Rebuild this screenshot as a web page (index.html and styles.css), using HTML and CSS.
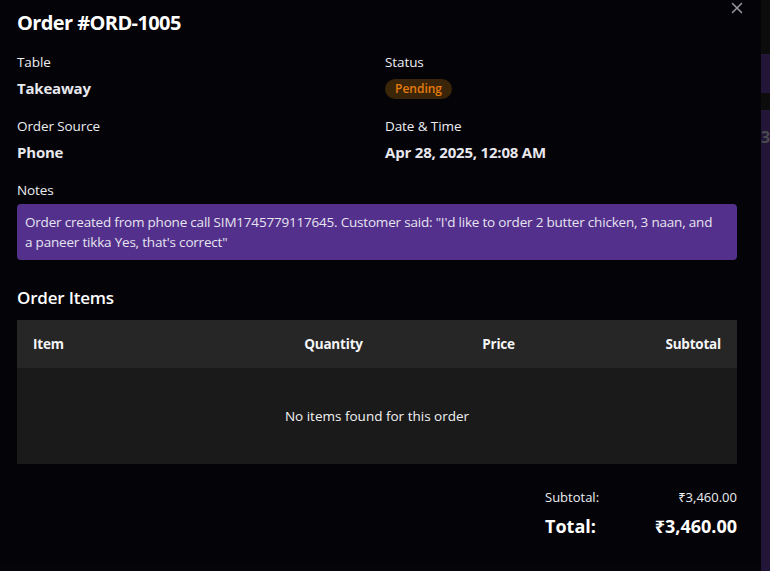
FILE: index.html
```html
<!DOCTYPE html>
<html lang="en">
<head>
<meta charset="utf-8">
<title>Order #ORD-1005</title>
<link rel="stylesheet" href="styles.css">
</head>
<body>
<div class="page">
  <div class="modal">
    <button class="close" aria-label="Close">
      <svg width="12" height="12" viewBox="0 0 12 12"><path d="M1.5 1.5l9 9M10.5 1.5l-9 9" stroke="#9a9aa2" stroke-width="1.5" stroke-linecap="round"/></svg>
    </button>
    <h2 class="title">Order #ORD-1005</h2>
    <div class="info-grid">
      <div class="field">
        <div class="label">Table</div>
        <div class="value">Takeaway</div>
      </div>
      <div class="field">
        <div class="label">Status</div>
        <div class="badge-row"><span class="badge">Pending</span></div>
      </div>
      <div class="field">
        <div class="label">Order Source</div>
        <div class="value">Phone</div>
      </div>
      <div class="field">
        <div class="label">Date &amp; Time</div>
        <div class="value">Apr 28, 2025, 12:08 AM</div>
      </div>
    </div>
    <div class="label notes-label">Notes</div>
    <div class="notes">Order created from phone call SIM1745779117645. Customer said: "I'd like to order 2 butter chicken, 3 naan, and a paneer tikka Yes, that's correct"</div>
    <h3 class="section-title">Order Items</h3>
    <div class="table">
      <div class="thead">
        <div class="th th-item">Item</div>
        <div class="th th-center">Quantity</div>
        <div class="th th-center">Price</div>
        <div class="th th-right">Subtotal</div>
      </div>
      <div class="tbody">No items found for this order</div>
    </div>
    <div class="totals">
      <div class="total-row"><span>Subtotal:</span><span>₹3,460.00</span></div>
      <div class="total-row grand"><span>Total:</span><span>₹3,460.00</span></div>
    </div>
  </div>
  <div class="behind">
    <div class="behind-top"></div>
    <div class="behind-card short"></div>
    <div class="behind-gap"></div>
    <div class="behind-card tall"><span class="behind-num">3</span></div>
  </div>
</div>
</body>
</html>
```

FILE: styles.css
```css
* { box-sizing: border-box; }
html, body {
  margin: 0;
  padding: 0;
  background: #050409;
  height: 571px;
  overflow: hidden;
}
body {
  font-family: "Open Sans", "Noto Sans", sans-serif;
  color: #f3f4f6;
  font-size: 14px;
}
.page {
  display: flex;
  height: 571px;
}
.modal {
  position: relative;
  width: 761px;
  flex: none;
  height: 566px;
  background: #040308;
  border-bottom-right-radius: 10px;
  padding: 10px 24px 0 17px;
}
.close {
  position: absolute;
  top: 1px;
  right: 17px;
  background: none;
  border: 0;
  padding: 0;
  width: 14px;
  height: 14px;
  display: flex;
  align-items: center;
  justify-content: center;
}
.title {
  margin: 0;
  font-size: 20px;
  font-weight: 700;
  color: #ffffff;
  line-height: 26px;
  letter-spacing: -0.6px;
}
.info-grid {
  display: grid;
  grid-template-columns: 368px 1fr;
  row-gap: 17px;
  margin-top: 16px;
}
.label {
  font-size: 13.5px;
  line-height: 20px;
  color: #eceef2;
  letter-spacing: -0.1px;
}
.value {
  margin-top: 6px;
  font-size: 15px;
  font-weight: 700;
  line-height: 20px;
  color: #e8e8ee;
  letter-spacing: -0.2px;
}
.badge-row {
  margin-top: 7px;
  height: 20px;
  display: flex;
  align-items: center;
}
.badge {
  display: inline-block;
  background: #3b2508;
  color: #e57b0c;
  font-size: 12px;
  font-weight: 600;
  line-height: 20px;
  padding: 0 10px;
  border-radius: 10px;
}
.notes-label {
  margin-top: 18px;
}
.notes {
  margin-top: 4px;
  background: #53308c;
  border-radius: 4px;
  padding: 8px 16px 8px 8px;
  font-size: 13.5px;
  line-height: 20px;
  color: #e6e4f0;
  letter-spacing: -0.2px;
}
.section-title {
  margin: 26px 0 0;
  font-size: 17px;
  font-weight: 600;
  line-height: 24px;
  color: #ffffff;
  letter-spacing: -0.2px;
}
.table {
  margin-top: 10px;
}
.thead {
  display: grid;
  grid-template-columns: 218px 165px 165px 1fr;
  background: #262626;
  height: 48px;
  align-items: center;
  padding: 0 16px;
}
.th {
  font-size: 13.5px;
  font-weight: 700;
  color: #f5f5f7;
  letter-spacing: -0.2px;
}
.th-center { text-align: center; }
.th-right { text-align: right; }
.tbody {
  background: #1a1a1a;
  height: 96px;
  display: flex;
  align-items: center;
  justify-content: center;
  font-size: 13.5px;
  color: #f2f2f4;
}
.totals {
  width: 192px;
  margin: 22px 0 0 auto;
}
.total-row {
  display: flex;
  justify-content: space-between;
  font-size: 13px;
  line-height: 20px;
  color: #eceef2;
  padding-top: 1px;
}
.total-row.grand {
  margin-top: 7px;
  padding-top: 0;
  font-size: 18px;
  font-weight: 700;
  line-height: 24px;
  color: #ffffff;
}
.behind {
  flex: 1;
  display: flex;
  flex-direction: column;
  background: #050409;
}
.behind-top {
  height: 54px;
  background: #0c0c0c;
}
.behind-card {
  background: #221538;
}
.behind-card.short { height: 39px; }
.behind-gap { height: 17px; background: #0c0c0c; }
.behind-card.tall {
  flex: 1;
  position: relative;
  overflow: hidden;
}
.behind-num {
  position: absolute;
  left: 0;
  top: 16px;
  font-size: 16px;
  font-weight: 700;
  color: #4a4a50;
}
```
